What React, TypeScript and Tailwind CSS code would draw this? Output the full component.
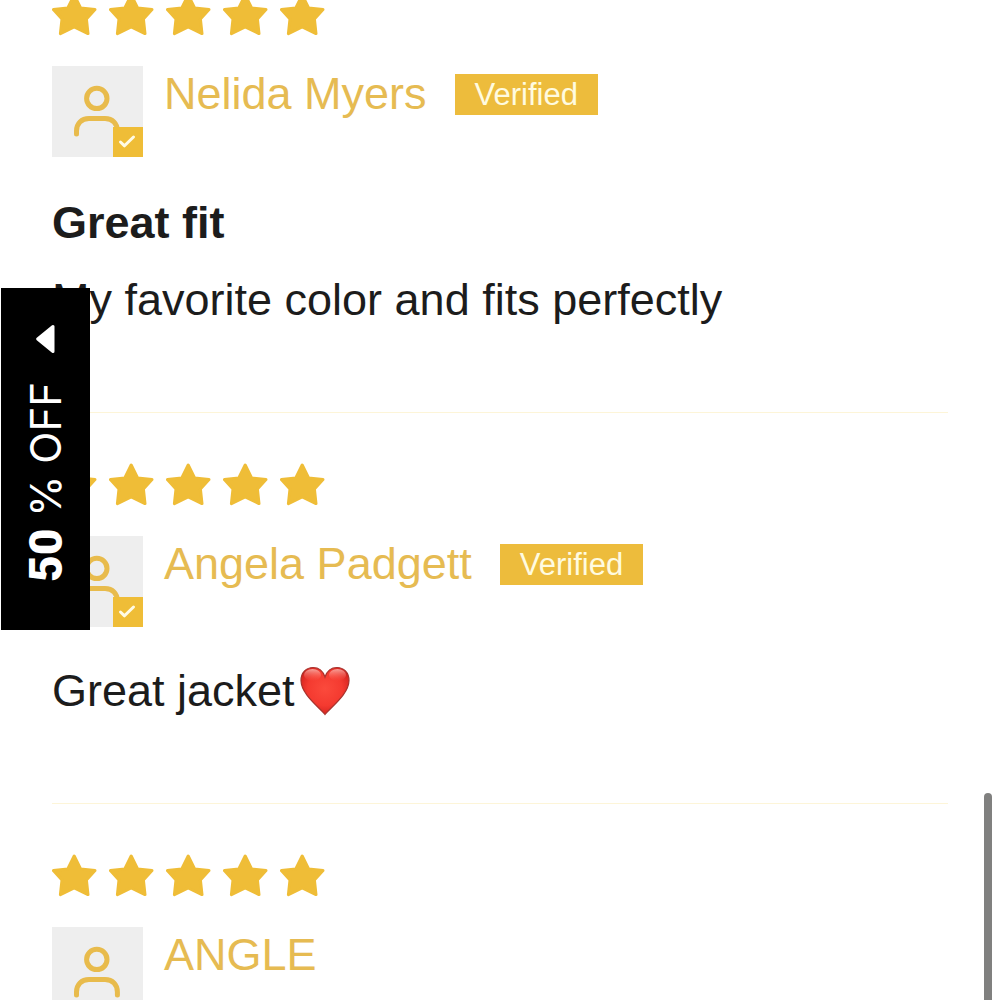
interface Review {
  author: string
  verified: boolean
  title?: string
  body?: string
  heart?: boolean
}

const reviews: Review[] = [
  {
    author: 'Nelida Myers',
    verified: true,
    title: 'Great fit',
    body: 'My favorite color and fits perfectly',
  },
  { author: 'Angela Padgett', verified: true, body: 'Great jacket', heart: true },
  { author: 'ANGLE', verified: false },
]

function Star() {
  return (
    <svg width="45" height="44" viewBox="0 0 45 44" className="text-[#efbd37]">
      <path
        d="M22.2 2 L28.6 15 L43 16.6 L34.4 26 L36 40.6 L22.2 34 L8.4 40.6 L10 26 L1.4 16.6 L15.8 15 Z"
        fill="currentColor"
        stroke="currentColor"
        strokeWidth="3"
        strokeLinejoin="round"
      />
    </svg>
  )
}

function Stars() {
  return (
    <div className="flex gap-3" role="img" aria-label="5 stars">
      {[1, 2, 3, 4, 5].map((n) => (
        <Star key={n} />
      ))}
    </div>
  )
}

function Avatar({ verified }: { verified: boolean }) {
  return (
    <div className="relative size-[91px] shrink-0 bg-[#eeeeee]">
      <svg
        viewBox="0 0 91 91"
        fill="none"
        stroke="#e8bb4c"
        strokeWidth="5"
        strokeLinecap="round"
        className="size-full"
      >
        <circle cx="44.8" cy="32.4" r="10.2" />
        <path d="M24.5 68 V65 C24.5 57.5 29.5 52.6 37 52.6 H53 C60.5 52.6 65.4 57.5 65.4 65 V68" />
      </svg>
      {verified && (
        <span className="absolute right-0 bottom-0 size-[30px] bg-[#efbd37]">
          <svg
            viewBox="0 0 30 30"
            fill="none"
            stroke="#fffbe6"
            strokeWidth="3"
            strokeLinecap="round"
            strokeLinejoin="round"
          >
            <path d="M7.5 15 L11.5 18.8 L20.5 10" />
          </svg>
        </span>
      )}
    </div>
  )
}

function Heart() {
  return (
    <svg width="52" height="50" viewBox="0 0 52 50" role="img" aria-label="red heart" className="ml-1">
      <defs>
        <radialGradient id="heart-fill" cx="0.5" cy="0.45" r="0.6">
          <stop offset="0" stopColor="#fb4a3c" />
          <stop offset="0.6" stopColor="#f43a30" />
          <stop offset="1" stopColor="#cf1f1c" />
        </radialGradient>
        <linearGradient id="heart-shine" x1="0" y1="0" x2="0" y2="1">
          <stop offset="0" stopColor="#ffd5cd" stopOpacity="0.7" />
          <stop offset="1" stopColor="#ff6a5c" stopOpacity="0" />
        </linearGradient>
      </defs>
      <path
        d="M26 48.5 C20 41 2 28 2 14.5 C2 6.5 7.5 1.5 14 1.5 C20 1.5 24 5 26 11 C28 5 32 1.5 38 1.5 C44.5 1.5 50 6.5 50 14.5 C50 28 32 41 26 48.5 Z"
        fill="url(#heart-fill)"
        stroke="#a8322c"
        strokeWidth="1.2"
      />
      <ellipse cx="13.5" cy="9" rx="8.5" ry="6" fill="url(#heart-shine)" />
      <ellipse cx="38.5" cy="9" rx="8.5" ry="6" fill="url(#heart-shine)" />
    </svg>
  )
}

function ReviewItem({ review }: { review: Review }) {
  return (
    <article className="border-b border-[#fdf5d8] pt-[50px] pb-20">
      <Stars />
      <div className="mt-[29px] flex gap-[21px]">
        <Avatar verified={review.verified} />
        <div className="flex h-14 items-center gap-7">
          <span className="text-[45px] text-[#e6bb52]">{review.author}</span>
          {review.verified && (
            <span className="bg-[#edbc3c] px-5 text-[31px] leading-[41px] text-[#fffbe0]">
              Verified
            </span>
          )}
        </div>
      </div>
      <div className="mt-8">
        {review.title && (
          <h3 className="mb-[11px] text-[45px] leading-[68px] font-bold">{review.title}</h3>
        )}
        {review.body && (
          <p className="flex items-center text-[45px] leading-[64px]">
            {review.body}
            {review.heart && <Heart />}
          </p>
        )}
      </div>
    </article>
  )
}

function DiscountTab() {
  return (
    <button
      type="button"
      className="absolute top-[288px] left-px flex w-[89px] flex-col items-center bg-black pt-9 pb-12 font-[Inter,sans-serif] text-white"
    >
      <svg width="20" height="30" viewBox="0 0 20 30" className="mb-7">
        <path
          d="M17 2.500 V27.500 L1.700 15 Z"
          fill="currentColor"
          stroke="currentColor"
          strokeWidth="3"
          strokeLinejoin="round"
        />
      </svg>
      <span className="rotate-180 text-[42px] leading-[60px] font-normal whitespace-nowrap [writing-mode:vertical-rl]">
        <b className="font-[Roboto,sans-serif] text-[46px] font-black">50</b> % OFF
      </span>
    </button>
  )
}

export default function App() {
  return (
    <div className="relative h-screen overflow-hidden bg-white font-['Liberation_Sans',Arial,sans-serif] text-[#1c1c1c]">
      <main className="-mt-[57px] px-[52px]">
        {reviews.map((review) => (
          <ReviewItem key={review.author} review={review} />
        ))}
      </main>
      <DiscountTab />
      {/* scroll thumb */}
      <div className="absolute top-[793px] right-2 -bottom-2 w-2 rounded-full bg-[#80807f]" />
    </div>
  )
}
